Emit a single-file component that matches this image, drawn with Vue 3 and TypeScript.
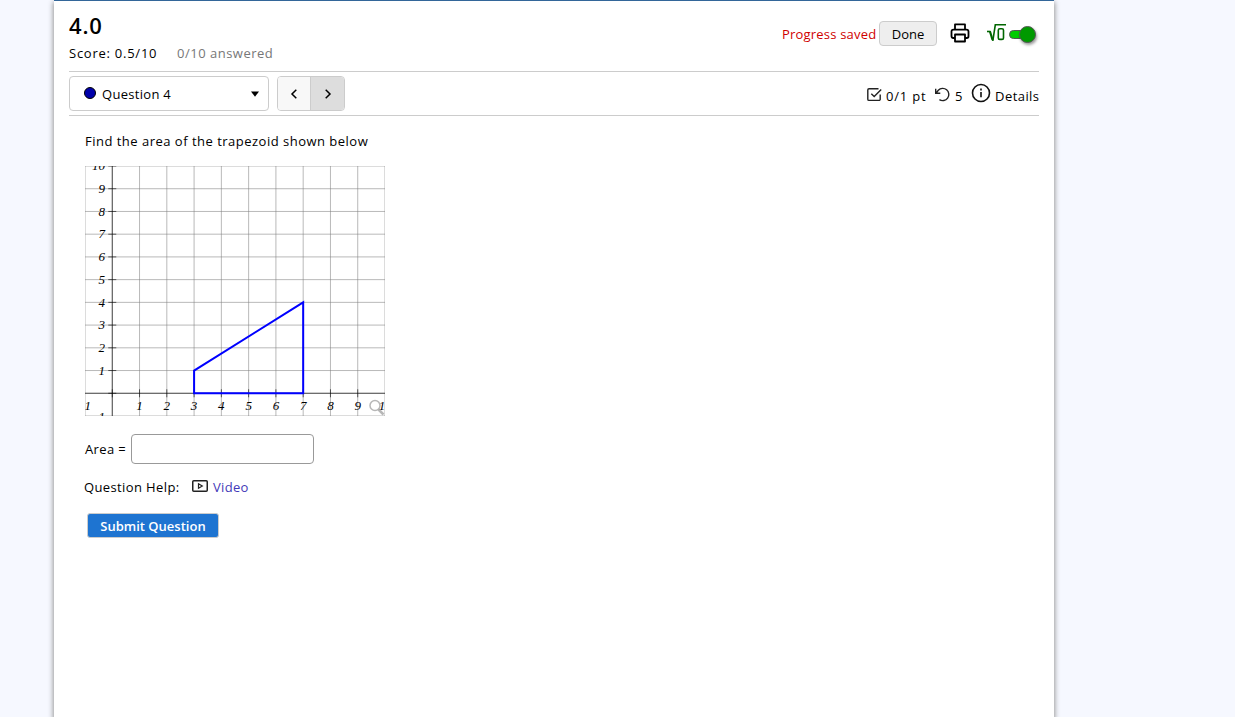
<template>
  <div class="page">
    <header class="header">
      <div class="header__left">
        <h1 class="header__title">{{ title }}</h1>
        <div class="header__score">
          <span class="score">Score: 0.5/10</span>
          <span class="answered">0/10 answered</span>
        </div>
      </div>
      <div class="header__right">
        <span class="progress">Progress saved</span>
        <button class="done-button">Done</button>
        <svg class="print-icon" width="20" height="20" viewBox="0 0 20 20" fill="none" stroke="#000" stroke-width="1.8" stroke-linejoin="round">
          <path d="M5 6.4V1.4h10v5M5 15H3.2A1.7 1.7 0 0 1 1.5 13.3V8.6A2 2 0 0 1 3.5 6.6h13a2 2 0 0 1 2 2v4.7a1.7 1.7 0 0 1-1.7 1.7H15" />
          <path d="M5 11.5h10v7H5z" />
        </svg>
        <svg class="root-icon" width="19" height="20" viewBox="0 0 19 20" fill="none" stroke="#060" stroke-width="1.6">
          <path d="M0 8.5h3" />
          <path d="M2.8 8L5.6 17" stroke-width="2.2" />
          <path d="M5.8 18L8.3 1.8h10.7" />
          <rect x="11.3" y="5.8" width="5.2" height="10.6" rx="1.5" />
        </svg>
        <div class="toggle"><div class="toggle__knob"></div></div>
      </div>
    </header>

    <nav class="bar">
      <div class="question-select">
        <span class="question-select__dot"></span>
        <span class="question-select__label">Question 4</span>
        <svg width="8" height="6" viewBox="0 0 8 6"><path d="M0 0.5h8L4 5.8z" /></svg>
      </div>
      <div class="pager">
        <button class="pager__button" aria-label="Previous">
          <svg width="8" height="10" viewBox="0 0 8 10" fill="none" stroke="#000" stroke-width="1.5"><path d="M6.3 0.8L2 5l4.3 4.2" /></svg>
        </button>
        <button class="pager__button pager__button--next" aria-label="Next">
          <svg width="8" height="10" viewBox="0 0 8 10" fill="none" stroke="#000" stroke-width="1.5"><path d="M1.7 0.8L6 5 1.7 9.2" /></svg>
        </button>
      </div>
      <div class="meta">
        <svg class="meta__check" width="15" height="15" viewBox="0 0 15 15" fill="none" stroke="#222" stroke-width="1.4">
          <path d="M11.5 1.7H2A1.2 1.2 0 0 0 0.8 2.9V12.2A1.2 1.2 0 0 0 2 13.4h10a1.2 1.2 0 0 0 1.2-1.2V7.5" />
          <path d="M4.3 6.8L7.2 9.6 14.2 2.4" />
        </svg>
        <span class="meta__points">0/1 pt</span>
        <svg class="meta__retry" width="15" height="15" viewBox="0 0 15 15" fill="none" stroke="#222" stroke-width="1.4">
          <path d="M0.7 1.7v4.6h4.6M1.3 5.9L3.3 3.3A6.1 6.1 0 1 1 4.4 12.6" />
        </svg>
        <span class="meta__tries">5</span>
        <svg class="meta__info" width="20" height="20" viewBox="0 0 20 20" fill="none" stroke="#111" stroke-width="1.6">
          <circle cx="10" cy="10" r="8.5" />
          <path d="M10 9v5.2M10 5.6v1.8" />
        </svg>
        <span class="meta__details">Details</span>
      </div>
    </nav>

    <main class="question">
      <p class="question__text">Find the area of the trapezoid shown below</p>
      <svg class="graph" width="300" height="250" viewBox="0 0 300 250">
        <g stroke="#808080" stroke-opacity="0.55" stroke-width="1">
          <line v-for="n in 12" :key="'v' + n" :x1="px(n - 2)" y1="0" :x2="px(n - 2)" y2="250" />
          <line v-for="n in 12" :key="'h' + n" x1="0" :y1="py(n - 2)" x2="300" :y2="py(n - 2)" />
        </g>
        <g stroke="#000" stroke-opacity="0.6" stroke-width="1">
          <line :x1="px(0)" y1="0" :x2="px(0)" y2="250" />
          <line x1="0" :y1="py(0)" x2="300" :y2="py(0)" />
          <line v-for="n in 10" :key="'tx' + n" :x1="px(n - 1)" :y1="py(0) - 4" :x2="px(n - 1)" :y2="py(0) + 4" />
          <line v-for="n in 11" :key="'ty' + n" :x1="px(0) - 4" :y1="py(n - 1)" :x2="px(0) + 4" :y2="py(n - 1)" />
        </g>
        <g class="graph__labels">
          <text v-for="n in 9" :key="'lx' + n" :x="px(n)" y="243.5" text-anchor="middle">{{ n }}</text>
          <text x="-4.8" y="243.5">-1</text>
          <text x="293.7" y="243.5">10</text>
          <text v-for="n in 10" :key="'ly' + n" x="20" :y="py(n) + 4.3" text-anchor="end">{{ n }}</text>
          <text x="20" y="254.5" text-anchor="end">-1</text>
        </g>
        <polygon :points="trapezoid" fill="none" stroke="#00f" stroke-width="2" />
        <g fill="none" stroke="#999" stroke-opacity="0.7">
          <circle cx="290" cy="239.5" r="5" stroke-width="1.5" />
          <path d="M293.5 243.5l5 5" stroke-width="2.5" />
        </g>
      </svg>

      <div class="answer">
        <label class="answer__label" for="area">Area =</label>
        <input id="area" class="answer__field" type="text" v-model="area" />
      </div>

      <div class="help">
        <span class="help__label">Question Help:</span>
        <svg class="help__icon" width="16" height="12" viewBox="0 0 16 12" fill="none" stroke="#222">
          <rect x="0.75" y="0.75" width="14.5" height="10.5" rx="1" stroke-width="1.5" />
          <path d="M6.5 3.7v4.6L10.3 6z" stroke-width="1.2" />
        </svg>
        <a class="help__link">Video</a>
      </div>

      <button class="submit-button">Submit Question</button>
    </main>
  </div>
</template>

<script setup lang="ts">
  import { ref } from 'vue'

  const title = ref('4.0')
  const area = ref('')

  // graph window runs from -1 to 10 on both axes
  const px = (x: number): number => ((x + 1) * 300) / 11
  const py = (y: number): number => ((10 - y) * 250) / 11

  const corners: [number, number][] = [[3, 0], [3, 1], [7, 4], [7, 0]]
  const trapezoid = corners.map(([x, y]) => `${px(x)},${py(y)}`).join(' ')
</script>

<style>
body {
  background-color: #f6f8ff;
  overflow: hidden;
}
</style>

<style scoped>
.page {
  box-sizing: border-box;
  width: 1000px;
  height: 717px;
  margin-left: 54px;
  padding: 0 15px;
  border-top: 1px solid #369;
  background-color: #fff;
  box-shadow: 0 3px 5px 1px #999;
  font-family: "Trebuchet MS", "Open Sans", sans-serif;
  font-size: 13px;
  line-height: 18px;
  color: #000;
  white-space: nowrap;
}

button {
  box-sizing: border-box;
  padding: 0;
  font-family: inherit;
  font-size: 13px;
  color: #000;
}

svg {
  flex: none;
  display: block;
}

.header {
  display: flex;
  justify-content: space-between;
  height: 70px;
  border-bottom: 1px solid #ccc;
}

.header__title {
  margin: 9px 0 0;
  font-size: 22px;
  font-weight: 600;
  line-height: 30px;
  letter-spacing: 0.8px;
}

.header__score {
  display: flex;
  gap: 20px;
  margin-top: 4px;
}

.score {
  width: 88px;
  letter-spacing: 0.75px;
}

.answered {
  color: #777;
  letter-spacing: 0.5px;
}

.header__right {
  display: flex;
  align-items: center;
  height: 25px;
  margin-top: 20px;
}

.progress {
  width: 94px;
  margin-right: 3px;
  color: #d00000;
  letter-spacing: 0.2px;
}

.done-button {
  width: 58px;
  height: 25px;
  margin-right: 13px;
  border: 1px solid #ccc;
  border-radius: 4px;
  background-color: #eee;
}

.print-icon {
  margin: -2px 17px 0 0;
}

.root-icon {
  margin: -2px 3px 0 0;
}

.toggle {
  position: relative;
  box-sizing: border-box;
  width: 24px;
  height: 9px;
  margin: 2px 6px 0 0;
  border: 1px solid #555;
  border-radius: 5px;
  background-color: #0c0;
}

.toggle__knob {
  position: absolute;
  top: -5px;
  right: -4px;
  box-sizing: border-box;
  width: 17px;
  height: 17px;
  border: 1px solid #555;
  border-radius: 50%;
  background-color: #090;
  box-shadow: 1px 2px 3px rgba(0, 0, 0, 0.4);
}

.bar {
  display: flex;
  align-items: center;
  height: 43px;
  border-bottom: 1px solid #ccc;
}

.question-select {
  display: flex;
  align-items: center;
  box-sizing: border-box;
  width: 200px;
  height: 35px;
  margin-right: 8px;
  padding: 0 9px 0 14px;
  border: 1px solid #ccc;
  border-radius: 4px;
}

.question-select__dot {
  box-sizing: border-box;
  width: 12px;
  height: 12px;
  margin-top: -2px;
  border: 1px solid #000;
  border-radius: 50%;
  background-color: #00a;
}

.question-select__label {
  flex: 1;
  margin-left: 6px;
  letter-spacing: 0.3px;
}

.pager {
  display: flex;
  box-sizing: border-box;
  width: 68px;
  height: 35px;
  border: 1px solid #ccc;
  border-radius: 4px;
  overflow: hidden;
}

.pager__button {
  display: flex;
  align-items: center;
  justify-content: center;
  width: 32px;
  border: none;
  background-color: #f8f8f8;
}

.pager__button--next {
  width: 34px;
  border-left: 1px solid #ccc;
  background-color: #ddd;
}

.meta {
  display: flex;
  align-items: center;
  margin: 5px 0 0 auto;
}

.meta__check {
  margin: -3px 4px 0 0;
}

.meta__points {
  width: 41px;
  margin-right: 8px;
  letter-spacing: 0.8px;
}

.meta__retry {
  margin: -3px 5px 0 0;
}

.meta__tries {
  width: 8px;
  margin-right: 8px;
}

.meta__info {
  margin: -6px 4px 0 0;
}

.meta__details {
  width: 44px;
  letter-spacing: 0.45px;
}

.question {
  display: flex;
  flex-direction: column;
  align-items: flex-start;
  padding: 16px 15px 0;
}

.question__text {
  margin: 0 0 16px 1px;
  letter-spacing: 0.49px;
}

.graph {
  margin-left: 1px;
}

.graph__labels {
  font-family: "Liberation Serif", serif;
  font-size: 13px;
  font-style: italic;
}

.answer {
  display: flex;
  align-items: center;
  margin: 18px 0 0 1px;
}

.answer__label {
  width: 46px;
  letter-spacing: 0.35px;
}

.answer__field {
  box-sizing: border-box;
  width: 183px;
  height: 30px;
  border: 1px solid #999;
  border-radius: 4px;
}

.help {
  display: flex;
  align-items: center;
  height: 18px;
  margin-top: 14px;
}

.help__label {
  width: 108px;
  letter-spacing: 0.38px;
}

.help__icon {
  margin-top: -2px;
}

.help__link {
  margin-left: 5px;
  color: #4338b8;
  letter-spacing: 0.3px;
}

.submit-button {
  width: 132px;
  height: 25px;
  margin: 17px 0 0 3px;
  border: 1px solid #ccc;
  border-radius: 3px;
  background-color: #1e74d1;
  font-weight: 600;
  color: #fff;
}
</style>
